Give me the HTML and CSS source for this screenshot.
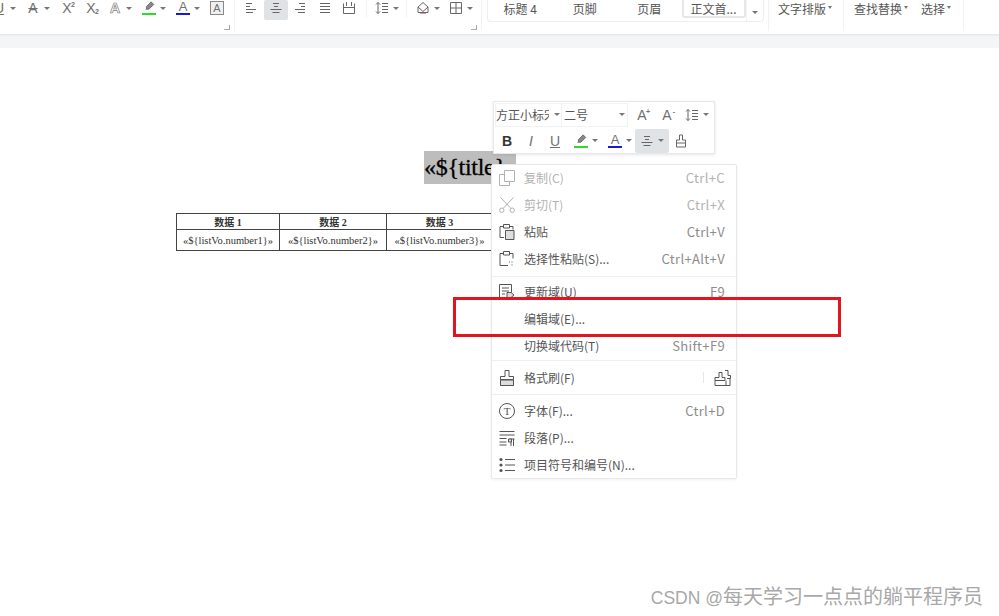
FILE: index.html
```html
<!DOCTYPE html>
<html lang="zh-CN">
<head>
  <meta charset="UTF-8">
  <meta name="viewport" content="width=device-width, initial-scale=1.0">
  <title>编辑域</title>
  <link rel="stylesheet" href="styles.css">
</head>
<body>
  <!-- icon sprite -->
  <svg class="sprite" xmlns="http://www.w3.org/2000/svg">
    <symbol id="i-left" viewBox="0 0 14 14"><path d="M2 2.500h6M2 5.500h4M2 8.500h10M2 11.500h7"/></symbol>
    <symbol id="i-center" viewBox="0 0 14 14"><path d="M4 2.500h6M5 5.500h4M1.500 8.500h11M3.500 11.500h7"/></symbol>
    <symbol id="i-right" viewBox="0 0 14 14"><path d="M6 2.500h6M8 5.500h4M2 8.500h10M5 11.500h7"/></symbol>
    <symbol id="i-justify" viewBox="0 0 14 14"><path d="M2 2.500h10M2 5.500h10M2 8.500h10M2 11.500h10"/></symbol>
    <symbol id="i-dist" viewBox="0 0 14 14"><path d="M1.500 2.500v10h11v-10M1.500 6.500h11M4.500 1v4M9.500 1v4"/></symbol>
    <symbol id="i-spacing" viewBox="0 0 14 14"><path d="M3 1.500v11M1 3.500l2-2 2 2M1 10.500l2 2 2-2M7 2.500h6M7 5.500h6M7 8.500h6M7 11.500h6"/></symbol>
    <symbol id="i-shade" viewBox="0 0 14 14"><path d="M7 1.500 12 6l-5 4.500-5-4.500zM2 6v5.500h10V6"/><path class="tint" d="M4 12.500h6"/></symbol>
    <symbol id="i-grid" viewBox="0 0 14 14"><path d="M1.500 1.500h11v11h-11zM7 1.500v11M1.500 7h11"/></symbol>
    <symbol id="i-pen" viewBox="0 0 14 14"><path class="fill-dark" d="M9.500 1 12.500 4 7 9.500H4V6.500zM3 10.500 4 9.500"/></symbol>
    <symbol id="i-brush" viewBox="0 0 14 14"><path d="M5.500 1h3v5h3v3h-9V6h3zM2.500 9v4h9V9"/></symbol>
    <symbol id="i-copy" viewBox="0 0 16 16"><path d="M5.500 .5h10v11h-10zM5.500 4.500H.5v11h10v-4"/></symbol>
    <symbol id="i-cut" viewBox="0 0 16 16"><path d="M1.500 .5 12 11.500M14.500 .5 4 11.500"/><circle cx="2.800" cy="13.200" r="2.200"/><circle cx="13.200" cy="13.200" r="2.200"/></symbol>
    <symbol id="i-paste" viewBox="0 0 16 16"><path d="M5 2.500H1v11h4M11 2.500h3v3M4.500 .5h6v3.500h-6z"/><path class="fill" d="M6.500 6.500h8.500v9h-8.500z"/></symbol>
    <symbol id="i-paste-sp" viewBox="0 0 16 16"><path d="M5 2.500H1v12h8M11 2.500h3v5M4.500 .5h6v3.500h-6zM10 11h1M12.500 11h1M12.500 14h1"/></symbol>
    <symbol id="i-update" viewBox="0 0 16 16"><path d="M.5 .5h12v8M.5 .5v14h6M3 4h7M3 7h7M3 10h3"/><path class="fill" d="M8 8.500h4l3 2.500-3 2.500H8z"/></symbol>
    <symbol id="i-brush-lg" viewBox="0 0 16 16"><path d="M6 .5h4v6h4.500v3h-13v-3H6zM1.500 9.500v6h13v-6"/><path class="fill" d="M1.500 10h13v5.500h-13z"/></symbol>
    <symbol id="i-brush-lock" viewBox="0 0 18 16"><path d="M6 2.500h3v5h3v3H2v-3h4zM2 10.500v5h11v-5M12 .5h3v5h2.500v3H14M13 15.500h4v-7"/></symbol>
    <symbol id="i-para" viewBox="0 0 16 16"><path d="M.5 1.500h15M.5 5h15M.5 8.500h7M.5 12h7M.5 15h7M10.500 9h5M12 9v7M14.500 9v7"/><path class="fill" d="M9.500 9h3v3h-3z"/></symbol>
    <symbol id="i-list" viewBox="0 0 16 16"><path d="M6 2.500h10M6 8h10M6 13.500h10"/><circle class="dot" cx="2" cy="2.500" r="1.600"/><circle class="dot" cx="2" cy="8" r="1.600"/><circle class="dot" cx="2" cy="13.500" r="1.600"/></symbol>
  </svg>

  <header class="ribbon">
    <section class="group group-font">
      <div class="cluster">
        <span class="tool"><span class="letter letter-u">U</span><i class="caret"></i></span>
        <span class="tool"><span class="letter letter-strike">A</span><i class="caret"></i></span>
        <span class="tool"><span class="letter">X<small class="up">2</small></span></span>
        <span class="tool"><span class="letter">X<small class="down">2</small></span></span>
        <span class="tool"><span class="letter letter-outline">A</span><i class="caret"></i></span>
        <span class="tool"><span class="mark mark-green"><svg class="ico"><use href="#i-pen"/></svg></span><i class="caret"></i></span>
        <span class="tool"><span class="letter letter-blue">A</span><i class="caret"></i></span>
        <span class="tool"><span class="letter letter-box">A</span></span>
      </div>
      <i class="launcher"></i>
    </section>

    <section class="group group-para">
      <div class="cluster cluster-align">
        <span class="tool"><svg class="ico"><use href="#i-left"/></svg></span>
        <span class="tool tool-on"><svg class="ico"><use href="#i-center"/></svg></span>
        <span class="tool"><svg class="ico"><use href="#i-right"/></svg></span>
        <span class="tool"><svg class="ico"><use href="#i-justify"/></svg></span>
        <span class="tool"><svg class="ico"><use href="#i-dist"/></svg></span>
      </div>
      <div class="cluster cluster-line">
        <span class="tool"><svg class="ico"><use href="#i-spacing"/></svg><i class="caret"></i></span>
      </div>
      <div class="cluster cluster-fill">
        <span class="tool"><svg class="ico"><use href="#i-shade"/></svg><i class="caret"></i></span>
        <span class="tool"><svg class="ico"><use href="#i-grid"/></svg><i class="caret"></i></span>
      </div>
      <i class="launcher"></i>
    </section>

    <section class="gallery">
      <div class="style-item">标题 4</div>
      <div class="style-item">页脚</div>
      <div class="style-item">页眉</div>
      <div class="style-item style-item-on">正文首...</div>
      <div class="gallery-more"><i class="caret"></i></div>
    </section>

    <section class="group group-text group-layout">
      <span class="text-tool">文字排版<i class="caret caret-sm"></i></span>
    </section>
    <section class="group group-text group-find">
      <span class="text-tool">查找替换<i class="caret caret-sm"></i></span>
      <span class="text-tool">选择<i class="caret caret-sm"></i></span>
    </section>
  </header>

  <div class="band"></div>

  <main class="doc">
    <div class="doc-title"><span class="doc-title-field">«${title}»</span></div>
    <table class="doc-table">
      <tr>
        <th>数据 1</th>
        <th>数据 2</th>
        <th>数据 3</th>
      </tr>
      <tr>
        <td>«${listVo.number1}»</td>
        <td>«${listVo.number2}»</td>
        <td>«${listVo.number3}»</td>
      </tr>
    </table>
  </main>

  <!-- floating mini toolbar -->
  <div class="mini">
    <div class="mini-row mini-row-top">
      <span class="select select-font"><span class="select-text">方正小标宋</span><i class="caret"></i></span>
      <span class="select select-size"><span>二号</span><i class="caret"></i></span>
      <span class="tool tool-grow"><span class="letter">A<small class="up">+</small></span></span>
      <span class="tool tool-grow"><span class="letter">A<small class="up">-</small></span></span>
      <span class="tool"><svg class="ico"><use href="#i-spacing"/></svg><i class="caret"></i></span>
    </div>
    <div class="mini-row mini-row-bottom">
      <span class="tool"><span class="letter letter-bold">B</span></span>
      <span class="tool"><span class="letter letter-italic">I</span></span>
      <span class="tool"><span class="letter letter-u">U</span></span>
      <span class="tool tool-shift"><span class="mark mark-green"><svg class="ico"><use href="#i-pen"/></svg></span><i class="caret"></i></span>
      <span class="tool"><span class="letter letter-blue">A</span><i class="caret"></i></span>
      <span class="tool tool-on tool-on-mini"><svg class="ico"><use href="#i-center"/></svg><i class="caret"></i></span>
      <span class="tool"><svg class="ico"><use href="#i-brush"/></svg></span>
    </div>
  </div>

  <!-- context menu -->
  <div class="menu">
    <div class="menu-row is-disabled"><svg class="menu-ico"><use href="#i-copy"/></svg><span class="menu-label">复制(C)</span><span class="menu-key">Ctrl+C</span></div>
    <div class="menu-row is-disabled"><svg class="menu-ico"><use href="#i-cut"/></svg><span class="menu-label">剪切(T)</span><span class="menu-key">Ctrl+X</span></div>
    <div class="menu-row"><svg class="menu-ico"><use href="#i-paste"/></svg><span class="menu-label">粘贴</span><span class="menu-key">Ctrl+V</span></div>
    <div class="menu-row"><svg class="menu-ico"><use href="#i-paste-sp"/></svg><span class="menu-label">选择性粘贴(S)...</span><span class="menu-key">Ctrl+Alt+V</span></div>
    <div class="menu-sep"></div>
    <div class="menu-row"><svg class="menu-ico"><use href="#i-update"/></svg><span class="menu-label">更新域(U)</span><span class="menu-key">F9</span></div>
    <div class="menu-row"><span class="menu-ico"></span><span class="menu-label">编辑域(E)...</span></div>
    <div class="menu-row"><span class="menu-ico"></span><span class="menu-label">切换域代码(T)</span><span class="menu-key">Shift+F9</span></div>
    <div class="menu-sep menu-sep-flush"></div>
    <div class="menu-row menu-row-tall">
      <svg class="menu-ico"><use href="#i-brush-lg"/></svg><span class="menu-label">格式刷(F)</span>
      <span class="menu-split"><svg class="menu-ico-lock"><use href="#i-brush-lock"/></svg></span>
    </div>
    <div class="menu-sep menu-sep-end"></div>
    <div class="menu-row"><span class="menu-ico menu-ico-t">T</span><span class="menu-label">字体(F)...</span><span class="menu-key">Ctrl+D</span></div>
    <div class="menu-row"><svg class="menu-ico"><use href="#i-para"/></svg><span class="menu-label">段落(P)...</span></div>
    <div class="menu-row"><svg class="menu-ico"><use href="#i-list"/></svg><span class="menu-label">项目符号和编号(N)...</span></div>
  </div>

  <!-- annotation and watermark -->
  <div class="callout"></div>
  <div class="watermark"><span class="watermark-tag">CSDN @</span>每天学习一点点的躺平程序员</div>
</body>
</html>
```

FILE: styles.css
```css
* {
  box-sizing: border-box;
}

html, body {
  height: 100%;
}

body {
  margin: 0;
  position: relative;
  overflow: hidden;
  background: #fff;
  color: #555;
  font-family: "Noto Sans CJK SC", "Noto Sans", sans-serif;
  font-size: 12px;
}

.sprite {
  display: none;
}

/* ribbon */
.ribbon {
  display: flex;
  height: 34px;
  background: #fff;
  box-shadow: 0 1px 2px rgba(0, 0, 0, 0.08);
  position: relative;
}

.band {
  height: 14px;
  background: #f4f5f7;
}

.group {
  display: flex;
  position: relative;
  height: 31px;
  border-right: 1px solid #f1f2f3;
}

.group-font {
  width: 235px;
  padding-left: 0;
}

.group-para {
  width: 247px;
  padding-left: 9px;
}

.cluster {
  display: flex;
  gap: 10px;
  height: 18px;
  align-items: flex-start;
}

.group-font .cluster {
  margin-left: -8px;
}

.cluster-align {
  gap: 10.5px;
  padding-right: 9.5px;
}

.cluster-line {
  padding: 0 7px 0 8.5px;
  border-left: 1px solid #f1f2f3;
}

.cluster-fill {
  gap: 9px;
  padding-left: 9px;
  border-left: 1px solid #f1f2f3;
}

.launcher {
  position: absolute;
  right: 4px;
  bottom: 1px;
  width: 6px;
  height: 5px;
  border-right: 1px solid #aaa;
  border-bottom: 1px solid #aaa;
}

.tool {
  display: flex;
  align-items: center;
  gap: 4px;
  height: 16px;
  color: #666;
}

.tool-on {
  height: 20px;
  padding: 0 5px 4px;
  margin: 0 -5px -4px;
  background: #dfe3e6;
  border-radius: 2px;
}

.ico {
  display: block;
  width: 14px;
  height: 14px;
  fill: none;
  stroke: #666;
  stroke-width: 1;
}

.tint {
  stroke: #e39a9a;
}

.fill-dark {
  fill: #888;
}

.caret {
  display: block;
  width: 0;
  height: 0;
  border-left: 3px solid transparent;
  border-right: 3px solid transparent;
  border-top: 3px solid #777;
}

.caret-sm {
  display: inline-block;
  margin-left: 2px;
  vertical-align: 5px;
  border-left-width: 2px;
  border-right-width: 2px;
}

.letter {
  display: block;
  position: relative;
  width: 14px;
  height: 14px;
  line-height: 14px;
  text-align: center;
  font-family: "Liberation Sans", sans-serif;
  font-size: 14px;
  color: #707070;
}

.letter small {
  position: absolute;
  right: -1px;
  font-size: 7px;
  line-height: 7px;
  font-weight: bold;
}

.up {
  top: 0;
}

.down {
  bottom: 0;
}

.letter-u {
  text-decoration: underline;
}

.letter-strike {
  text-decoration: line-through;
}

.letter-outline {
  color: #fff;
  -webkit-text-stroke: 0.7px #777;
  font-weight: bold;
}

.letter-blue {
  border-bottom: 2px solid #1a1ad6;
  line-height: 12px;
  font-size: 13px;
}

.letter-box {
  border: 1px solid #888;
  background: #f0f0f0;
  line-height: 12px;
  font-size: 11px;
}

.letter-bold {
  font-weight: bold;
  color: #333;
}

.letter-italic {
  font-style: italic;
}

.mark {
  display: block;
  height: 14px;
}

.mark-green {
  border-bottom: 2px solid #2bdc2b;
}

.mark .ico {
  height: 12px;
}

/* style gallery */
.gallery {
  display: flex;
  width: 277px;
  height: 22px;
  margin-left: 5px;
  border: 1px solid #eceef0;
  border-top: 0;
  border-radius: 0 0 4px 4px;
}

.style-item {
  width: 64.5px;
  height: 18px;
  line-height: 18px;
  text-align: center;
  color: #555;
}

.style-item-on {
  width: 64px;
  border: 2px solid #e6e7e9;
  border-top: 0;
  border-radius: 0 0 3px 3px;
  line-height: 17px;
}

.gallery-more {
  flex: 1;
  display: flex;
  justify-content: center;
  padding-top: 11px;
  border-left: 1px solid #f1f2f3;
}

.group-text {
  align-items: flex-start;
  padding-top: 0;
  color: #555;
}

.group-layout {
  width: 76px;
  margin-left: 4px;
  padding-left: 9px;
  border-left: 1px solid #f1f2f3;
}

.group-find {
  width: 120px;
  padding-left: 10px;
  gap: 13px;
}

.text-tool {
  line-height: 18px;
  white-space: nowrap;
}

/* document */
.doc {
  padding-top: 103px;
}

.doc-title {
  height: 62px;
  padding-left: 424px;
}

.doc-title-field {
  display: block;
  width: 92px;
  height: 33px;
  line-height: 33px;
  background: #bdbdbd;
  color: #000;
  font-family: "Liberation Serif", serif;
  font-size: 24px;
  letter-spacing: -0.3px;
  -webkit-text-stroke: 0.3px #000;
  white-space: nowrap;
  overflow: hidden;
}

.doc-table {
  margin-left: 176px;
  border-collapse: collapse;
  table-layout: fixed;
  width: 317px;
  color: #333;
  font-family: "Liberation Serif", "Noto Sans CJK SC", serif;
  font-size: 10.5px;
}

.doc-table th, .doc-table td {
  border: 1px solid #444;
  padding: 0;
  text-align: center;
  white-space: nowrap;
}

.doc-table th {
  height: 15px;
  font-size: 10px;
  font-weight: bold;
}

.doc-table td {
  height: 21px;
}

.doc-table th:nth-child(1) {
  width: 103px;
}

.doc-table th:nth-child(2) {
  width: 107px;
}

/* mini toolbar */
.mini {
  position: absolute;
  left: 493px;
  top: 101px;
  width: 222px;
  height: 53px;
  background: #fff;
  border: 1px solid #e6e8ea;
  box-shadow: 0 1px 3px rgba(0, 0, 0, 0.1);
}

.mini-row {
  display: flex;
  align-items: center;
}

.mini-row-top {
  height: 25px;
  padding-left: 1px;
}

.mini-row-bottom {
  height: 25px;
  margin-top: 1px;
  padding-left: 6px;
  gap: 10px;
}

.select {
  display: flex;
  align-items: center;
  justify-content: space-between;
  height: 24px;
  padding: 0 2px 0 2px;
  border: 1px solid #f1f2f3;
  color: #555;
  font-size: 12px;
}

.select-font {
  width: 67px;
  padding: 0 1px 0 0;
}

.select-text {
  display: block;
  width: 53px;
  overflow: hidden;
  white-space: nowrap;
}

.select-size {
  width: 66px;
  margin-right: 7px;
  border-left: 0;
}

.tool-grow {
  margin-right: 11px;
}

.tool-shift {
  margin-left: 2px;
}

.tool-on-mini {
  height: 24px;
  padding: 0 5px;
  margin: 0 -5px 0 -7px;
}

/* context menu */
.menu {
  position: absolute;
  left: 491px;
  top: 164px;
  width: 246px;
  height: 315px;
  background: #fff;
  border: 1px solid #e6e8ea;
  border-radius: 2px;
  box-shadow: 0 1px 3px rgba(0, 0, 0, 0.06);
  font-size: 12px;
  color: #555;
}

.menu-row {
  display: flex;
  align-items: center;
  height: 27px;
  padding: 0 11px 2px 7px;
}

.menu-row-tall {
  height: 33px;
  padding-bottom: 0;
}

.menu-ico {
  flex: none;
  display: block;
  width: 16px;
  height: 16px;
  margin-right: 9px;
  fill: none;
  stroke: #555;
  stroke-width: 1;
}

.fill {
  fill: #ddd;
}

.dot {
  fill: #555;
  stroke: none;
}

.menu-ico-t {
  line-height: 14px;
  text-align: center;
  border: 1px solid #555;
  border-radius: 50%;
  font-family: "Liberation Serif", serif;
  font-size: 11px;
}

.menu-label {
  flex: 1;
  white-space: nowrap;
}

.menu-key {
  color: #8c8c8c;
  font-size: 13px;
  letter-spacing: 0.35px;
  white-space: nowrap;
}

.is-disabled .menu-label, .is-disabled .menu-key {
  color: #b2b2b2;
}

.is-disabled .menu-ico {
  stroke: #b2b2b2;
}

.menu-sep {
  height: 1px;
  margin: 3px 0 2px;
  background: #eceef0;
}

.menu-sep-flush {
  margin: 0;
}

.menu-sep-end {
  margin: 0 0 3px;
}

.menu-split {
  display: flex;
  align-items: center;
  height: 11px;
  margin-right: -6px;
  padding-left: 9px;
  border-left: 1px solid #e3e5e7;
}

.menu-ico-lock {
  width: 18px;
  height: 16px;
  fill: none;
  stroke: #555;
  stroke-width: 1;
}

/* annotation */
.callout {
  position: absolute;
  left: 453px;
  top: 297px;
  width: 388px;
  height: 40px;
  border: 3px solid #e3141e;
}

.watermark {
  position: absolute;
  right: 16px;
  top: 584px;
  font-family: "Liberation Sans", "Noto Sans CJK SC", sans-serif;
  font-size: 20px;
  line-height: 26px;
  color: #a8a8a8;
  white-space: nowrap;
}

.watermark-tag {
  font-size: 17.5px;
}
```
